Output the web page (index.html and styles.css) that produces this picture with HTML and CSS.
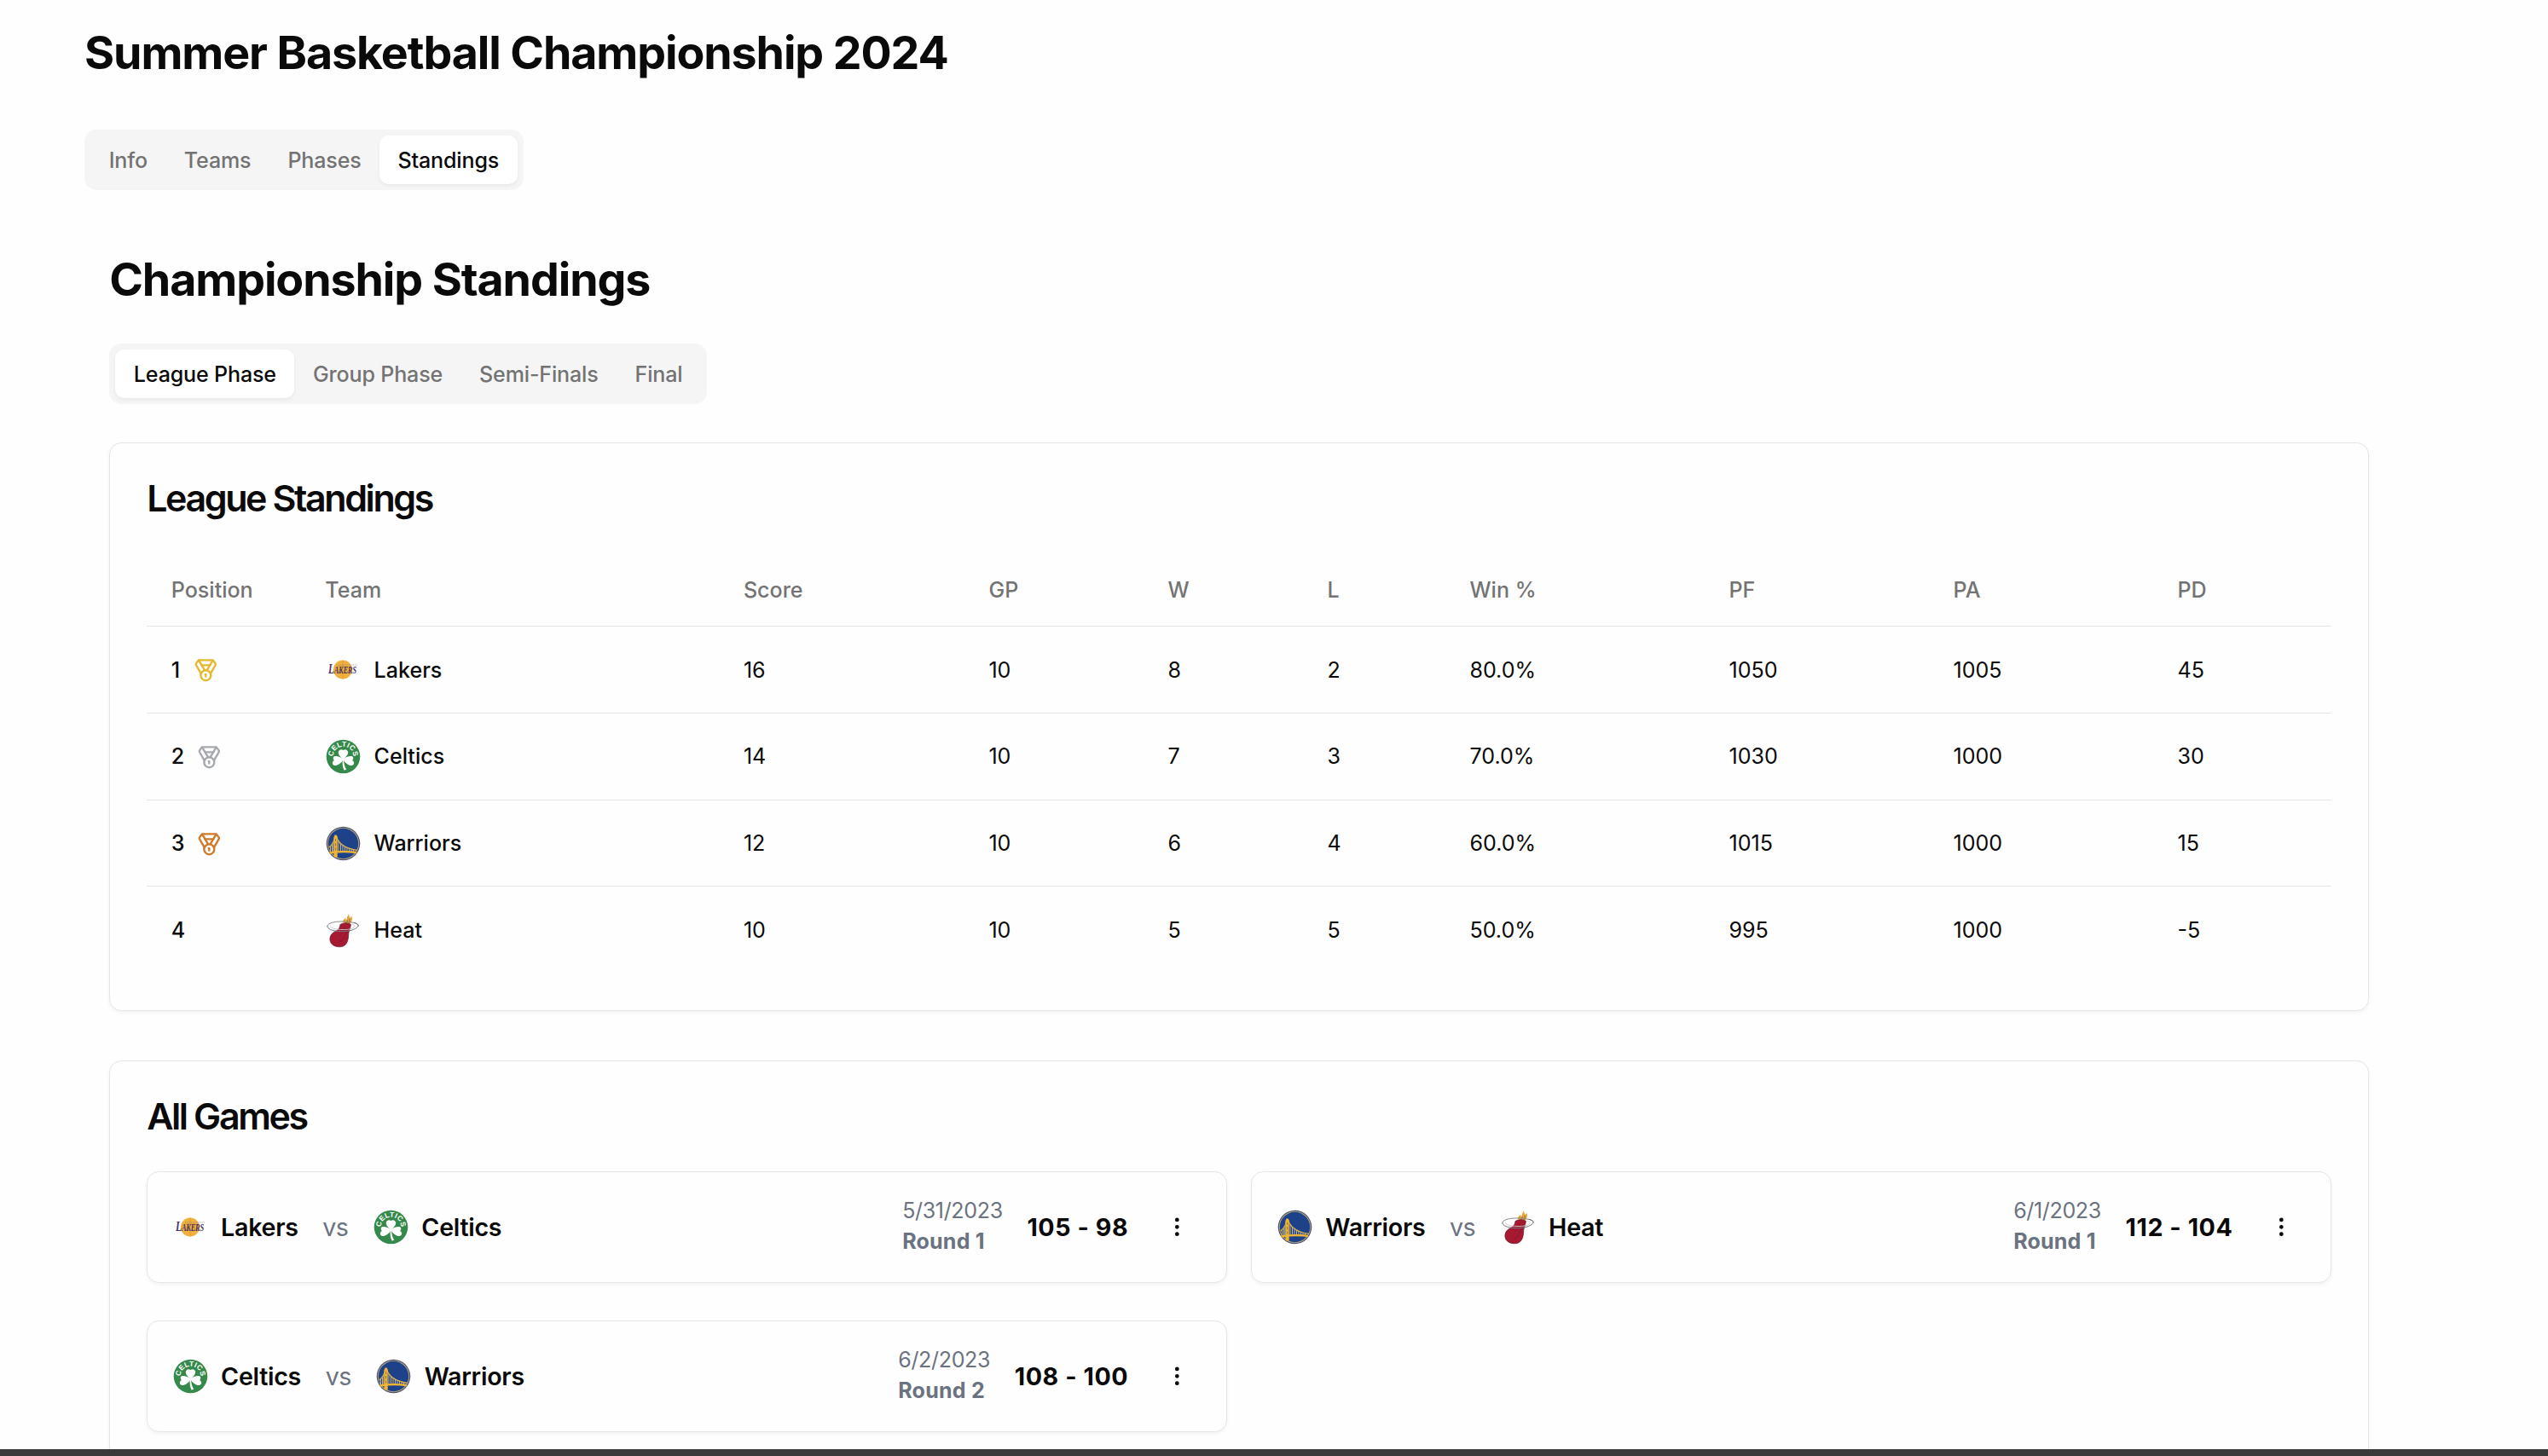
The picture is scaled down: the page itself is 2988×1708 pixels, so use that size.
FILE: index.html
```html
<!DOCTYPE html>
<html lang="en">
<head>
  <meta charset="UTF-8" />
  <title>Summer Basketball Championship 2024</title>
  <meta name="viewport" content="width=device-width, initial-scale=1.0" />
  <link rel="stylesheet" href="styles.css">
</head>
<body>
  <!-- shared icons -->
  <svg class="sprite" aria-hidden="true">
    <symbol id="medal" viewBox="0 0 24 24">
      <path d="M7.21 15 2.66 7.14a2 2 0 0 1 .13-2.2L4.4 2.8A2 2 0 0 1 6 2h12a2 2 0 0 1 1.6.8l1.6 2.14a2 2 0 0 1 .14 2.2L16.79 15" />
      <path d="M11 12 5.12 2.2" />
      <path d="m13 12 5.88-9.8" />
      <path d="M8 7h8" />
      <circle cx="12" cy="17" r="5" />
      <path d="M12 18v-2h-.5" />
    </symbol>
    <symbol id="dots" viewBox="0 0 24 24">
      <circle cx="12" cy="12" r="1" />
      <circle cx="12" cy="5" r="1" />
      <circle cx="12" cy="19" r="1" />
    </symbol>
    <symbol id="lakers" viewBox="0 0 43 43">
      <circle cx="21" cy="21.5" r="11" fill="#f0b03c" />
      <path d="M11 19.5q10-4 20 0M11 23.5q10 3 20 0M21 10.5v22" fill="none" stroke="#dc9a35" stroke-width=".8" />
      <path d="M15 16h23" stroke="#8d7f93" stroke-width="1" stroke-dasharray="1.5 .7" opacity=".6" />
      <text x="4" y="26.5" class="lakers-word" textLength="33" lengthAdjust="spacingAndGlyphs"><tspan font-size="16">L</tspan><tspan font-size="11.5">AKERS</tspan></text>
    </symbol>
    <symbol id="celtics" viewBox="0 0 43 43">
      <path id="celtics-arc" d="M9.9 24.3a11.9 11.9 0 1 1 23.200 0" fill="none" />
      <circle cx="21.5" cy="21.5" r="19.800" fill="#35894a" />
      <text class="celtics-word"><textPath href="#celtics-arc" startOffset="50%" text-anchor="middle">CELTICS</textPath></text>
      <g fill="#fff">
        <path d="M21.5 25C17 20.500 14.800 18 16.200 15q1.900-3 5.300-1 3.400-2 5.300 1C28.200 18 26 20.500 21.500 25z" />
        <path d="M21.500 24.500C16 20.500 11 20.500 9.900 22.200q-1 2.300.9 3.800-3 2-1.500 4.700c1.900 2.600 8.200 1.500 12.200-5.700z" />
        <path d="M21.500 24.500c5.500-4 10.500-4 11.600-2.300q1 2.300-.9 3.800 3 2 1.500 4.700c-1.900 2.600-8.200 1.500-12.200-5.700z" />
        <path d="M20.700 24h1.500q-.2 8 3 12.500l-2.400 1.300q-2.900-5-2.100-13.800z" />
      </g>
    </symbol>
    <symbol id="warriors" viewBox="0 0 43 43">
      <circle cx="21.5" cy="21.5" r="19.8" fill="#4d5275" />
      <circle cx="21.5" cy="21.5" r="18.6" fill="#b6a878" />
      <circle cx="21.5" cy="21.5" r="17.7" fill="#1d428a" />
      <g fill="none" stroke="#d9ad4b">
        <path d="M4.600 26q6-4 7.200-13M13.500 13q3 13 24.500 16.500" stroke-width="1.300" />
        <path d="M6.500 25v8M8.500 23v10M10 20v13M16 18.500v13M18.500 21.500v10M21 23.500v8M23.500 25v6.500M26 26v5.500M28.500 27v4.500M31 28v3.500M33.500 28.500v3" stroke="#cdb77d" stroke-width="1" />
        <path d="M5.500 32.500q15-2.500 31.500-.5" stroke="#f0b432" stroke-width="2.400" />
      </g>
      <path d="M10.500 37V14l1-2.500h2.200l1 2.500v23.500l-2 .3z" fill="#f0b432" />
      <path d="M12.600 16v3M12.600 21v3.500M12.600 26.500v3" stroke="#7a6840" stroke-width=".8" />
    </symbol>
    <symbol id="heat" viewBox="0 0 43 43">
      <path d="M21 12q0-3.500 3.500-5-.5 2 1 2.500 0-3.500 2.500-7.500.5 4 1.500 5 1.500-1 1.500-2.500 2 3 0 7.500L29 15z" fill="#e3a63c" />
      <path d="M26 9q1 2-1 4.500M29 8q1 3-1.500 6" fill="none" stroke="#94582b" stroke-width=".8" />
      <path d="M3 17.500C2 13.500 9 11 20 11s21 2.500 19.500 5.500" fill="none" stroke="#8d8789" stroke-width="1" />
      <path d="M18 14.500q6-3.500 12.500 0-.5 3.800-2 7.300-.8 2.500-1 7.200c-.6 8.200-4.500 11.800-10.300 11.800-7.500 0-12-4.300-11.200-10.500.6-4.500 4.200-7 7.800-8.600 2.500-1.500 4-4 4.200-7.200z" fill="#a71930" stroke="#60182b" stroke-width=".7" />
      <path d="M23 17q0 7-6 10M27 18q-1 6-3 8-3 8-8 10" fill="none" stroke="#7e1530" stroke-width=".8" />
      <path d="M3 16.500c0 6.500 23 8.500 32.500 3 5.500-3 4.500-6-2-7.300" fill="none" stroke="#77747a" stroke-width="1" />
      <path d="M6.500 16.500c0 3.800 18.500 5.500 26 2.500 4-2 3-4-1-5" fill="none" stroke="#c9c7c8" stroke-width=".9" />
    </symbol>
  </svg>

  <main class="page">
    <h1>Summer Basketball Championship 2024</h1>
    <nav class="tabs">
      <button class="tab">Info</button>
      <button class="tab">Teams</button>
      <button class="tab">Phases</button>
      <button class="tab active">Standings</button>
    </nav>

    <section class="standings">
      <h1>Championship Standings</h1>
      <nav class="tabs">
        <button class="tab active">League Phase</button>
        <button class="tab">Group Phase</button>
        <button class="tab">Semi-Finals</button>
        <button class="tab">Final</button>
      </nav>

      <div class="card">
        <h3>League Standings</h3>
        <table>
          <colgroup>
            <col class="c-pos"><col class="c-team"><col class="c-score"><col class="c-gp"><col class="c-w"><col class="c-l"><col class="c-win"><col class="c-pf"><col class="c-pa"><col class="c-pd">
          </colgroup>
          <thead>
            <tr><th>Position</th><th>Team</th><th>Score</th><th>GP</th><th>W</th><th>L</th><th>Win %</th><th>PF</th><th>PA</th><th>PD</th></tr>
          </thead>
          <tbody>
            <tr>
              <td class="strong"><div class="cell">1 <svg class="medal gold"><use href="#medal" /></svg></div></td>
              <td class="strong"><div class="cell"><svg class="logo"><use href="#lakers" /></svg>Lakers</div></td>
              <td>16</td><td>10</td><td>8</td><td>2</td><td>80.0%</td><td>1050</td><td>1005</td><td>45</td>
            </tr>
            <tr>
              <td class="strong"><div class="cell">2 <svg class="medal silver"><use href="#medal" /></svg></div></td>
              <td class="strong"><div class="cell"><svg class="logo"><use href="#celtics" /></svg>Celtics</div></td>
              <td>14</td><td>10</td><td>7</td><td>3</td><td>70.0%</td><td>1030</td><td>1000</td><td>30</td>
            </tr>
            <tr>
              <td class="strong"><div class="cell">3 <svg class="medal bronze"><use href="#medal" /></svg></div></td>
              <td class="strong"><div class="cell"><svg class="logo"><use href="#warriors" /></svg>Warriors</div></td>
              <td>12</td><td>10</td><td>6</td><td>4</td><td>60.0%</td><td>1015</td><td>1000</td><td>15</td>
            </tr>
            <tr>
              <td class="strong"><div class="cell">4</div></td>
              <td class="strong"><div class="cell"><svg class="logo"><use href="#heat" /></svg>Heat</div></td>
              <td>10</td><td>10</td><td>5</td><td>5</td><td>50.0%</td><td>995</td><td>1000</td><td>-5</td>
            </tr>
          </tbody>
        </table>
      </div>

      <div class="card games-card">
        <h3>All Games</h3>
        <div class="games">
          <div class="game">
            <div class="team"><svg class="logo"><use href="#lakers" /></svg>Lakers</div>
            <span class="vs">vs</span>
            <div class="team"><svg class="logo"><use href="#celtics" /></svg>Celtics</div>
            <div class="when">5/31/2023<b>Round 1</b></div>
            <div class="result">105 - 98</div>
            <button class="menu"><svg><use href="#dots" /></svg></button>
          </div>
          <div class="game">
            <div class="team"><svg class="logo"><use href="#warriors" /></svg>Warriors</div>
            <span class="vs">vs</span>
            <div class="team"><svg class="logo"><use href="#heat" /></svg>Heat</div>
            <div class="when">6/1/2023<b>Round 1</b></div>
            <div class="result">112 - 104</div>
            <button class="menu"><svg><use href="#dots" /></svg></button>
          </div>
          <div class="game">
            <div class="team"><svg class="logo"><use href="#celtics" /></svg>Celtics</div>
            <span class="vs">vs</span>
            <div class="team"><svg class="logo"><use href="#warriors" /></svg>Warriors</div>
            <div class="when">6/2/2023<b>Round 2</b></div>
            <div class="result">108 - 100</div>
            <button class="menu"><svg><use href="#dots" /></svg></button>
          </div>
        </div>
      </div>
    </section>
  </main>
  <footer class="bottom-bar"></footer>
</body>
</html>
```
FILE: styles.css
```css
* {
  box-sizing: border-box;
  margin: 0;
  padding: 0;
}
html {
  font-size: 28.65px;
}
body {
  height: 100vh;
  display: flex;
  flex-direction: column;
  overflow: hidden;
  font-family: Inter, 'Liberation Sans', sans-serif;
  color: #0a0a0a;
  background: #fefefe;
}
.sprite {
  display: none;
}
.page {
  flex: 1;
  min-height: 0;
  overflow: hidden;
  padding: 30px 210px 0 99px;
}
.bottom-bar {
  flex: none;
  height: 8px;
  background: #3a3a3a;
}
h1 {
  font-size: 1.875rem;
  line-height: 2.25rem;
  font-weight: 700;
  letter-spacing: -0.0205em;
}
h3 {
  font-size: 1.5rem;
  line-height: 1;
  font-weight: 600;
  letter-spacing: -0.056em;
}
button {
  border: none;
  background: none;
  font: inherit;
  color: inherit;
}

/* Tabs */
.tabs {
  display: flex;
  width: fit-content;
  height: 2.5rem;
  margin-top: 2rem;
  padding: .25rem;
  border-radius: .5rem;
  background: #f5f5f5;
}
.tab {
  padding: 0 .75rem;
  border-radius: .375rem;
  font-size: .875rem;
  font-weight: 500;
  letter-spacing: -0.006em;
  color: #737373;
}
.tab.active {
  background: #fff;
  color: #0a0a0a;
  box-shadow: 0 2px 4px rgba(0, 0, 0, .06);
}
.standings {
  padding: 73px 0 0 29.2px;
}
.standings .tabs {
  margin-top: 42px;
}

/* Cards */
.card {
  margin-top: 44.5px;
  padding: 1.5rem;
  border: 1px solid #e5e5e5;
  border-radius: .5rem;
  box-shadow: 0 2px 4px rgba(0, 0, 0, .05);
}
.games-card {
  margin-top: 58px;
}

/* Standings table */
table {
  width: 100%;
  margin-top: 1.5rem;
  table-layout: fixed;
  border-collapse: collapse;
  font-size: .875rem;
}
th, td {
  padding: 0 1rem;
  text-align: left;
  white-space: nowrap;
}
th {
  height: 86px;
  font-weight: 500;
  color: #737373;
}
td {
  height: 101.7px;
}
tr {
  border-bottom: 1px solid #e5e5e5;
}
tbody tr:last-child {
  border-bottom: none;
}
.c-pos { width: 180.5px; }
.c-team { width: 490.5px; }
.c-score { width: 287.5px; }
.c-gp { width: 210px; }
.c-w { width: 187px; }
.c-l { width: 167px; }
.c-win { width: 304px; }
.c-pf { width: 263px; }
.c-pa { width: 263px; }
.c-pd { width: 209px; }
.strong {
  font-weight: 500;
}
.cell, .team {
  display: flex;
  align-items: center;
  gap: .5rem;
}
.logo {
  width: 1.5rem;
  height: 1.5rem;
}
.medal {
  width: 1rem;
  height: 1rem;
  margin-top: 2px;
}
.medal, .menu svg {
  fill: none;
  stroke: currentColor;
  stroke-width: 2;
  stroke-linecap: round;
  stroke-linejoin: round;
}
.gold {
  margin-left: 1px;
  color: #e5b92e;
}
.silver { color: #a6a9ae; }
.bronze { color: #cf7a28; }
.lakers-word {
  font-family: 'Liberation Serif', serif;
  font-weight: 700;
  font-style: italic;
  fill: #48305f;
}
.celtics-word {
  font-family: 'Liberation Sans', sans-serif;
  font-size: 8.5px;
  font-weight: 700;
  letter-spacing: .2px;
  fill: #fff;
}

/* Games */
.games {
  display: grid;
  grid-template-columns: 1fr 1fr;
  gap: 44px 1rem;
  margin-top: 1.5rem;
}
.game {
  display: flex;
  align-items: center;
  gap: 1rem;
  height: 131px;
  padding: 0 1rem;
  border: 1px solid #e5e5e5;
  border-radius: .5rem;
  box-shadow: 0 2px 4px rgba(0, 0, 0, .05);
}
.team {
  font-weight: 600;
  letter-spacing: -0.01em;
}
.vs {
  letter-spacing: -0.02em;
  color: #6b7280;
}
.when {
  margin-left: auto;
  font-size: .875rem;
  line-height: 1.25rem;
  letter-spacing: -0.014em;
  color: #6b7280;
}
.when b {
  display: block;
  letter-spacing: 0.008em;
}
.result {
  font-weight: 700;
  letter-spacing: 0.02em;
}
.menu {
  display: flex;
  align-items: center;
  justify-content: center;
  width: 2rem;
  height: 2rem;
}
.menu svg {
  width: 1rem;
  height: 1rem;
}
```
